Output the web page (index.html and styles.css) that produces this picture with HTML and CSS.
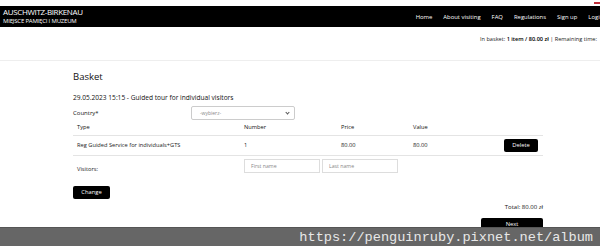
FILE: index.html
```html
<!DOCTYPE html>
<html>
  <head>
    <title>Basket - Auschwitz-Birkenau</title>
    <meta charset="utf-8">
    <link rel="stylesheet" href="styles.css">
  </head>
<body>

  <div class="topline"><span class="flag"></span></div>

  <div class="header">
    <div class="logo">
      <div class="logo_main">AUSCHWITZ-BIRKENAU</div>
      <div class="logo_sub">MIEJSCE PAMIĘCI I MUZEUM</div>
    </div>
    <ul class="menu">
      <li>Home</li>
      <li>About visiting</li>
      <li>FAQ</li>
      <li>Regulations</li>
      <li>Sign up</li>
      <li>Login</li>
    </ul>
  </div>

  <div class="status">In basket: <b>1 item / 80.00 zł</b> | Remaining time:</div>

  <div class="content">
    <h1>Basket</h1>
    <p class="event">29.05.2023 15:15 - Guided tour for individual visitors</p>

    <div class="country">
      <label>Country*</label>
      <div class="select">-wybierz-<span class="arrow"></span></div>
    </div>

    <table class="items">
      <tr>
        <th class="c_type">Type</th>
        <th class="c_num">Number</th>
        <th class="c_price">Price</th>
        <th class="c_value">Value</th>
        <th></th>
      </tr>
      <tr class="row">
        <td>Reg Guided Service for individuals+GTS</td>
        <td>1</td>
        <td>80.00</td>
        <td>80.00</td>
        <td class="c_btn"><span class="btn btn_del">Delete</span></td>
      </tr>
      <tr class="visitors">
        <td class="v_label">Visitors:</td>
        <td colspan="4">
          <span class="field">First name</span><span class="field">Last name</span>
        </td>
      </tr>
    </table>

    <span class="btn btn_change">Change</span>

    <div class="total">Total: 80.00 zł</div>
    <div class="next_row"><span class="btn btn_next">Next</span></div>
  </div>

  <div class="watermark">https://penguinruby.pixnet.net/album</div>

</body>
</html>
```

FILE: styles.css
```css
html { overflow: hidden; }
body {
  margin: 0;
  width: 600px;
  height: 246px;
  font-family: "Open Sans", sans-serif;
  font-size: 7px;
  color: #111;
  background: #fff;
  position: relative;
  overflow: hidden;
}

.topline { height: 6px; position: relative; }
.flag { position: absolute; left: 594px; top: 2px; width: 6px; height: 2px; background: #c0303a; }

.header {
  height: 21px;
  background: #000;
  color: #fff;
  display: flex;
  align-items: center;
  overflow: hidden;
}
.logo { padding-left: 3px; line-height: 8.5px; flex-shrink: 0; }
.logo_main { font-size: 8px; letter-spacing: -0.35px; }
.logo_sub { font-size: 6px; letter-spacing: -0.2px; }
.menu {
  list-style: none;
  margin: 0 0 0 333px;
  padding: 0;
  display: flex;
  gap: 11px;
  font-size: 5.9px;
  white-space: nowrap;
  flex-shrink: 0;
}

.status {
  margin-top: 8px;
  padding: 0 0 17px 480px;
  font-size: 5.6px;
  color: #222;
  border-bottom: 1px solid #eee;
  white-space: nowrap;
  overflow: hidden;
}
.status b { font-weight: 600; color: #000; }

.content { margin-left: 73px; width: 470px; }
h1 { font-size: 9.5px; font-weight: normal; margin: 9px 0 0; line-height: 13px; }
.event { margin: 10px 0 0; line-height: 10px; font-size: 6.6px; }

.country { display: flex; align-items: center; margin-top: 3px; font-size: 6px; }
.country label { width: 118px; }
.select {
  width: 94px;
  height: 12px;
  border: 1px solid #ccc;
  border-radius: 2px;
  padding-left: 8px;
  font-size: 5px;
  color: #888;
  line-height: 12px;
  position: relative;
}
.arrow {
  position: absolute; right: 5px; top: 4px;
  width: 2px; height: 2px;
  border-right: 1px solid #555; border-bottom: 1px solid #555;
  transform: rotate(45deg);
}

.items { width: 470px; border-collapse: collapse; margin-top: 1px; font-size: 5.7px; }
.items th { font-weight: normal; text-align: left; padding: 2px 4px 3px; line-height: 9px; border-bottom: 1px solid #e4e4e4; }
.items td { padding: 3px 4px; line-height: 9px; color: #222; }
.items .row td { border-bottom: 1px solid #e4e4e4; height: 13px; }
.c_type { width: 159px; }
.c_num { width: 89px; }
.c_price { width: 64px; }
.c_value { width: 80px; }
.c_btn { text-align: right; }
.visitors td { padding-top: 3px; height: 14px; }
.items .v_label { padding-top: 6px; padding-bottom: 0; }
.field {
  display: inline-block;
  width: 68px;
  height: 12px;
  border: 1px solid #ddd;
  padding-left: 6px;
  margin-right: 2px;
  color: #888;
  font-size: 5.2px;
  line-height: 12px;
  vertical-align: middle;
}

.btn {
  display: inline-block;
  background: #000;
  color: #fff;
  border-radius: 2px;
  text-align: center;
  font-size: 5.8px;
  line-height: 13px;
  height: 13px;
}
.btn_del { width: 34px; margin-right: 1px; }
.btn_change { width: 37px; margin-top: 10px; }
.total { text-align: right; margin-top: 4px; line-height: 9px; font-size: 6px; }
.next_row { text-align: right; margin-top: 6px; }
.btn_next { width: 62px; }

.watermark {
  position: absolute;
  left: 0; top: 227px;
  width: 600px;
  height: 19px;
  background: #666;
  color: #e8e8e8;
  font-family: "Liberation Mono", monospace;
  font-size: 13.6px;
  line-height: 19px;
  text-align: right;
  padding-right: 7px;
  box-sizing: border-box;
  border-top: 1px solid #555;
}
```
